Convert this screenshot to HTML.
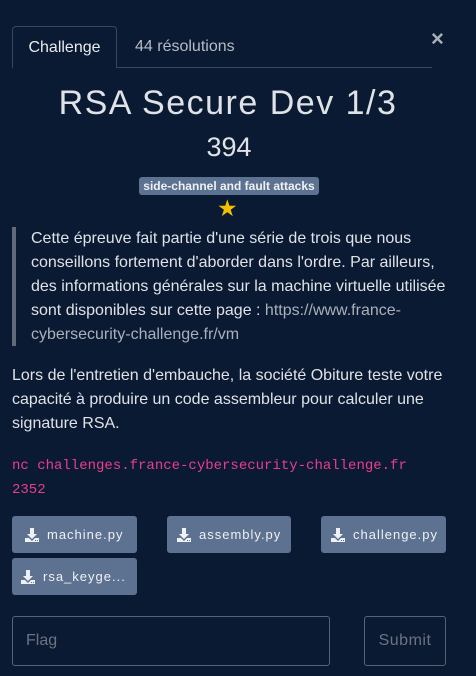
<!DOCTYPE html>
<html><head><meta charset="utf-8"><style>
body{margin:0;width:476px;height:676px;background:#0b1a33;font-family:"Liberation Sans",sans-serif;color:#e4e6ea;position:relative;overflow:hidden}
.a{position:absolute}
.tab{left:12px;top:26px;width:105px;height:42px;border:1px solid #3b4658;border-bottom:none;border-radius:4px 4px 0 0;box-sizing:border-box;background:#0b1a33;font-size:16px;color:#e8eaee;text-align:center;line-height:42px}
.btn{background:#5d7190;border-radius:3px;height:37px;font-size:13px;letter-spacing:1px;color:#eef1f5;line-height:37px;box-sizing:border-box}
.btn svg{vertical-align:-3px;margin-right:6px}
p{margin:0}
</style></head><body>
<div class="a" style="left:12px;top:67px;width:420px;height:1px;background:#3b4658"></div>
<div class="a tab">Challenge</div>
<div class="a" style="left:135px;top:38px;font-size:16px;color:#b7bcc5">44 résolutions</div>
<div class="a" style="left:431px;top:26px;font-size:22px;font-weight:bold;color:#aab0ba">×</div>
<div class="a" style="left:0;width:456px;top:84px;text-align:center;font-size:34px;font-weight:300;letter-spacing:1.5px;color:#dfe2e6">RSA Secure Dev 1/3</div>
<div class="a" style="left:0;width:458px;top:132px;text-align:center;font-size:27px;color:#dfe2e6">394</div>
<div class="a" style="left:139px;top:177px;width:180px;height:18px;background:#5d7190;border-radius:3px;font-size:12px;font-weight:bold;text-align:center;line-height:18px;color:#eef1f5">side-channel and fault attacks</div>
<div class="a" style="left:217px;top:195px;font-size:23px;color:#f2c000">★</div>
<div class="a" style="left:12px;top:227px;width:4px;height:119px;background:#606a78"></div>
<p class="a" style="left:31px;top:227px;width:420px;font-size:16px;line-height:24px;color:#dfe2e6">Cette épreuve fait partie d'une série de trois que nous conseillons fortement d'aborder dans l'ordre. Par ailleurs, des informations générales sur la machine virtuelle utilisée sont disponibles sur cette page : <span style="color:#a9b0ba">https://www.france-<br>cybersecurity-challenge.fr/vm</span></p>
<p class="a" style="left:12px;top:364px;width:440px;font-size:16px;line-height:24px;color:#dfe2e6">Lors de l'entretien d'embauche, la société Obiture teste votre capacité à produire un code assembleur pour calculer une signature RSA.</p>
<div class="a" style="left:12px;top:454px;font-family:'Liberation Mono',monospace;font-size:14px;line-height:24px;color:#e83e8c">nc challenges.france-cybersecurity-challenge.fr<br>2352</div>
<svg width="0" height="0" style="position:absolute"><defs><g id="d"><path d="M5 0h4v6h3l-5 5-5-5h3z" fill="#eef1f5"/><path d="M0 10h4l3 3 3-3h4v4H0z" fill="#eef1f5"/><rect x="10" y="12" width="1" height="1" fill="#5d7190"/><rect x="12" y="12" width="1" height="1" fill="#5d7190"/></g></defs></svg>
<div class="a btn" style="left:12px;top:516px;width:125px;padding-left:13px"><svg width="16" height="14"><use href="#d"/></svg>machine.py</div>
<div class="a btn" style="left:167px;top:516px;width:124px;padding-left:10px"><svg width="16" height="14"><use href="#d"/></svg>assembly.py</div>
<div class="a btn" style="left:321px;top:516px;width:125px;padding-left:10px"><svg width="16" height="14"><use href="#d"/></svg>challenge.py</div>
<div class="a btn" style="left:12px;top:558px;width:125px;padding-left:9px"><svg width="16" height="14"><use href="#d"/></svg>rsa_keyge...</div>
<div class="a" style="left:12px;top:616px;width:318px;height:50px;border:1px solid #5a6170;border-radius:3px;box-sizing:border-box;font-size:16px;color:#6b7380;line-height:48px;padding-left:13px">Flag</div>
<div class="a" style="left:364px;top:616px;width:82px;height:50px;border:1px solid #5a6170;border-radius:3px;box-sizing:border-box;font-size:16px;color:#6b7380;line-height:48px;text-align:center;letter-spacing:0.5px">Submit</div>
</body></html>
